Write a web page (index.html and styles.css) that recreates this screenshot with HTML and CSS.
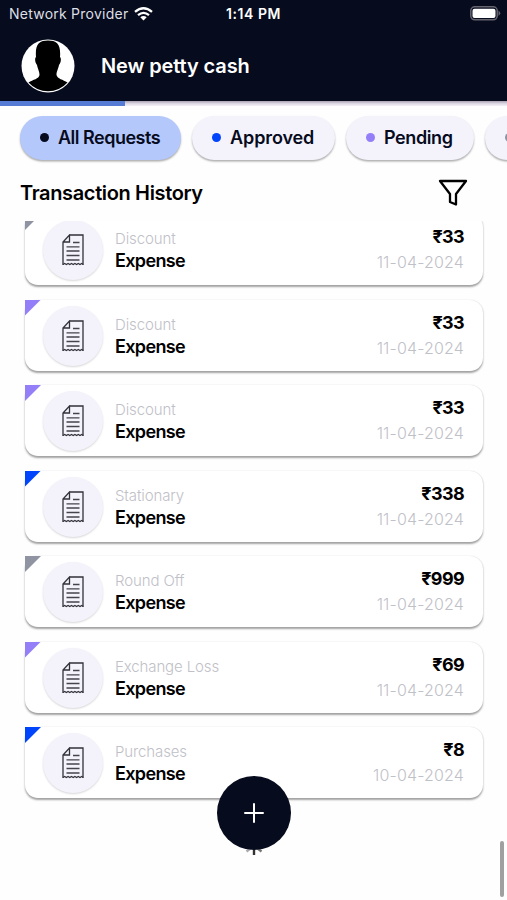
FILE: index.html
```html
<!DOCTYPE html>
<html lang="en">
<head>
<meta charset="utf-8">
<title>New petty cash</title>
<link rel="stylesheet" href="styles.css">
</head>
<body>
<svg class="defs" width="0" height="0" aria-hidden="true">
  <symbol id="receipt" viewBox="0 0 22 32">
    <path d="M7.500 1H21V31M1 31V8L7.500 1V8H1" fill="none" stroke="#32323a" stroke-width="1.300"/>
    <path d="M11 8.500H17.500M4.500 12.800H17.500M4.500 17H17.500M4.500 21.500H17.500M4.500 26H17.500" stroke="#44444c" stroke-width="1.300"/>
    <path d="M1 30.500l1.700-1 1.700 1 1.700-1 1.700 1 1.700-1 1.700 1 1.700-1 1.700 1 1.700-1 1.700 1 1.700-1 1.600 1" fill="none" stroke="#32323a" stroke-width="1.100"/>
  </symbol>
</svg>
<div class="app">
  <header class="top">
    <div class="status">
      <span class="carrier">Network Provider</span>
      <svg class="wifi" viewBox="0 0 19 14"><g fill="none" stroke="#fff" stroke-width="2.300"><path d="M1 4.900Q9.500-2.300 18 4.900"/><path d="M4 8.200Q9.500 3.600 15 8.200"/></g><path d="M6.300 10.200Q9.500 7.700 12.700 10.200L9.500 13.500Z" fill="#fff"/></svg>
      <span class="time">1:14 PM</span>
      <svg class="battery" viewBox="0 0 31 15"><rect x=".8" y=".8" width="26.400" height="13" rx="4" fill="none" stroke="#66646f" stroke-width="1.500"/><rect x="2.500" y="2.700" width="23" height="9.300" rx="2" fill="#fff"/><path d="M28.500 4.500Q32 7.300 28.500 10Z" fill="#66646f"/></svg>
    </div>
    <div class="title-row">
      <svg class="avatar" viewBox="0 0 54 54"><circle cx="27" cy="27" r="26.500" fill="#fff"/><path d="M27 1.500C36 1.500 40 5 39 18C40.500 19 40 24 38 26C37 31 35.500 32 35.500 36C36.500 40 42 40.500 46.500 43.500A26 26 0 0 1 7.500 43.500C12 40.500 18 40 18.500 36C18.500 32 17 31 16 26C14 24 13.500 19 15 18C14 5 18 1.500 27 1.500Z" fill="#000"/></svg>
      <h1>New petty cash</h1>
    </div>
  </header>
  <div class="progress"><div class="bar"></div></div>
  <nav class="chips">
    <div class="chip active"><i class="dot ink"></i><span class="t-all">All Requests</span></div>
    <div class="chip c2"><i class="dot blue"></i><span class="t-app">Approved</span></div>
    <div class="chip c3"><i class="dot violet"></i><span class="t-pen">Pending</span></div>
    <div class="chip c4"><i class="dot gray"></i></div>
  </nav>
  <div class="heading">
    <h2>Transaction History</h2>
    <svg class="filter" viewBox="0 0 30 28"><path d="M2 2H28L18 15V25.500L12 23V15Z" fill="none" stroke="#000" stroke-width="2.300" stroke-linejoin="round"/></svg>
  </div>
  <main class="list">
    <article class="card"><i class="flag gray"></i><div class="icon"><svg><use href="#receipt"/></svg></div><div class="info"><span class="kind">Discount</span><b>Expense</b></div><div class="sum"><b>₹33</b><time>11-04-2024</time></div></article>
    <article class="card"><i class="flag violet"></i><div class="icon"><svg><use href="#receipt"/></svg></div><div class="info"><span class="kind">Discount</span><b>Expense</b></div><div class="sum"><b>₹33</b><time>11-04-2024</time></div></article>
    <article class="card"><i class="flag violet"></i><div class="icon"><svg><use href="#receipt"/></svg></div><div class="info"><span class="kind">Discount</span><b>Expense</b></div><div class="sum"><b>₹33</b><time>11-04-2024</time></div></article>
    <article class="card"><i class="flag blue"></i><div class="icon"><svg><use href="#receipt"/></svg></div><div class="info"><span class="kind">Stationary</span><b>Expense</b></div><div class="sum"><b>₹338</b><time>11-04-2024</time></div></article>
    <article class="card"><i class="flag gray"></i><div class="icon"><svg><use href="#receipt"/></svg></div><div class="info"><span class="kind">Round Off</span><b>Expense</b></div><div class="sum"><b>₹999</b><time>11-04-2024</time></div></article>
    <article class="card"><i class="flag violet"></i><div class="icon"><svg><use href="#receipt"/></svg></div><div class="info"><span class="kind">Exchange Loss</span><b>Expense</b></div><div class="sum"><b>₹69</b><time>11-04-2024</time></div></article>
    <article class="card"><i class="flag blue"></i><div class="icon"><svg><use href="#receipt"/></svg></div><div class="info"><span class="kind">Purchases</span><b>Expense</b></div><div class="sum"><b>₹8</b><time>10-04-2024</time></div></article>
  </main>
  <svg class="spinner" viewBox="0 0 22 22"><g stroke-width="2.400"><path d="M11 13V20" stroke="#333"/><path d="M14 13L18.500 16.500" stroke="#777"/><path d="M8 13L3.500 16.500" stroke="#aaa"/></g></svg>
  <button class="add" aria-label="Add"><svg viewBox="0 0 20 20"><path d="M10 1V19M1 10H19" stroke="#fff" stroke-width="2" stroke-linecap="round"/></svg></button>
  <div class="scroll"></div>
</div>
</body>
</html>
```
FILE: styles.css
```css
* { box-sizing: border-box; }
body { margin: 0; background: #fefefe; font-family: Inter, "Liberation Sans", sans-serif; color: #000; }
.defs { position: absolute; }
.app { position: relative; width: 507px; height: 900px; overflow: hidden; display: flex; flex-direction: column; }
.top { height: 101px; flex: none; background: #060b1d; color: #fff; }
.status { display: flex; align-items: center; height: 27px; padding: 0 6px 0 9px; }
.carrier { width: 119px; font-size: 14px; letter-spacing: .24px; white-space: nowrap; color: #dedfe4; }
.wifi { width: 19px; height: 14px; margin-left: 6px; }
.time { width: 60px; margin-left: 73px; font-size: 14px; font-weight: 600; letter-spacing: .55px; white-space: nowrap; }
.battery { width: 31px; height: 15px; margin-left: auto; }
.title-row { display: flex; align-items: center; height: 78px; padding-left: 21px; }
.avatar { width: 54px; height: 54px; margin-right: 26px; }
h1 { margin: 0; font-size: 20px; line-height: 26px; font-weight: 600; white-space: nowrap; letter-spacing: -.1px; }
.progress { height: 5px; flex: none; background: linear-gradient(#a9a2b0, #dcd5e2 50%, #f5f2f7); }
.bar { width: 125px; height: 5px; background: #557bd5; }
.chips { display: flex; flex: none; gap: 11px; padding: 10px 0 0 20px; height: 61px; }
.chip { display: flex; flex: none; align-items: center; height: 44px; border-radius: 22px; background: #f4f2fb; box-shadow: 0 1.500px 2px rgba(0,0,0,.32); padding: 0 0 1px 20px; font-size: 18px; font-weight: 600; color: #060b1d; white-space: nowrap; }
.chip.active { width: 161px; background: #b5c8fc; }
.c2 { width: 143px; }
.c3 { width: 128px; }
.c4 { width: 90px; }
.dot { width: 9px; height: 9px; border-radius: 50%; margin-right: 9px; flex: none; }
.ink { background: #060b1d; }
.blue { background: #0045fb; }
.violet { background: #957ff8; }
.gray { background: #9094a2; }
.t-all { letter-spacing: -.5px; }
.t-app { letter-spacing: -.1px; }
.t-pen { letter-spacing: -.4px; }
.heading { display: flex; justify-content: space-between; align-items: center; flex: none; height: 54px; padding: 0 39px 2px 20px; }
h2 { margin: 0; font-size: 20px; font-weight: 600; letter-spacing: -.36px; }
.filter { width: 30px; height: 28px; }
.list { flex: none; height: 679px; overflow: hidden; padding: 0 24px 0 25px; display: flex; flex-direction: column; gap: 14.500px; }
.card { position: relative; display: flex; flex: none; height: 71px; padding: 6px 19px 0 18px; border-radius: 13px; background: #fff; box-shadow: 0 1.500px 2px rgba(0,0,0,.36), 0 0 1px rgba(0,0,0,.1); }
.card:first-child { margin-top: -7px; }
.flag { position: absolute; left: 0; top: 0; width: 16px; height: 16px; clip-path: polygon(0 0, 100% 0, 0 100%); }
.icon { display: flex; align-items: center; justify-content: center; width: 60px; height: 60px; border-radius: 50%; background: #f4f3fb; box-shadow: 0 1px 2px rgba(0,0,0,.16); }
.icon svg { width: 22px; height: 32px; }
.info { display: flex; flex-direction: column; margin-left: 12px; padding-top: 8px; }
.kind { font-size: 15px; line-height: 22px; font-weight: 300; letter-spacing: -.12px; color: #bfc1c8; }
.info b { font-size: 18px; line-height: 22px; font-weight: 600; letter-spacing: -.65px; }
.sum { display: flex; flex-direction: column; align-items: flex-end; margin-left: auto; padding-top: 5px; }
.sum b { font-size: 18px; line-height: 24px; font-weight: 700; letter-spacing: -.65px; }
.sum time { font-size: 16px; line-height: 27px; font-weight: 300; letter-spacing: .15px; color: #bfc1c8; }
.spinner { position: absolute; left: 243px; top: 835px; width: 22px; height: 22px; }
.add { position: absolute; left: 217px; top: 776px; width: 74px; height: 74px; padding: 0; border: 0; border-radius: 50%; background: #060b1d; display: flex; align-items: center; justify-content: center; }
.add svg { width: 20px; height: 20px; }
.scroll { position: absolute; right: 3px; top: 841px; width: 4px; height: 56px; border-radius: 2px; background: #a0a0a0; }
```
